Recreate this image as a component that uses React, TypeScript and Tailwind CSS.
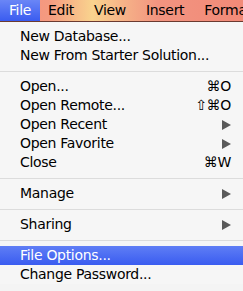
import React from "react";

const font = { fontFamily: '"Lucida Grande", "DejaVu Sans", "Liberation Sans", sans-serif' };

function Arrow() {
  return (
    <svg width="9" height="10" viewBox="0 0 9 10" className="block shrink-0">
      <path d="M0 0 L9 5 L0 10 Z" fill="#5a5a5a" />
    </svg>
  );
}

type Item = { label: string; sc?: string; sub?: boolean; hl?: boolean } | "sep";

const items: Item[] = [
  { label: "New Database..." },
  { label: "New From Starter Solution..." },
  "sep",
  { label: "Open...", sc: "⌘O" },
  { label: "Open Remote...", sc: "⇧⌘O" },
  { label: "Open Recent", sub: true },
  { label: "Open Favorite", sub: true },
  { label: "Close", sc: "⌘W" },
  "sep",
  { label: "Manage", sub: true },
  "sep",
  { label: "Sharing", sub: true },
  "sep",
  { label: "File Options...", hl: true },
  { label: "Change Password..." },
];

export default function App() {
  return (
    <div className="w-[243px] h-[291px] overflow-hidden bg-[#f4f4f4] text-[14px] tracking-[-0.3px] text-black" style={font}>
      <div className="h-[22px] flex items-stretch overflow-hidden border-b border-[#6b3a30] bg-[linear-gradient(90deg,#f6907c_0%,#f59a80_20%,#f9d38e_38%,#f6b488_50%,#f29480_65%,#f28a78_100%)]">
        <div className="w-[40px] shrink-0 flex items-center justify-center text-white bg-[linear-gradient(180deg,#6a86f6,#3a5cf0)]">File</div>
        <div className="flex items-center pl-[8px] gap-[20px] shrink-0 whitespace-nowrap">
          <span>Edit</span>
          <span>View</span>
          <span>Insert</span>
          <span>Format</span>
        </div>
      </div>
      <div className="pt-[5px] bg-[#f6f6f6]">
        {items.map((it, i) =>
          it === "sep" ? (
            <div key={i} className="h-[12px] flex items-center">
              <div className="w-full h-px bg-[#dcdcdc]" />
            </div>
          ) : (
            <div
              key={i}
              className={
                "h-[19px] flex items-center pl-[20px] pr-[12px] " +
                (it.hl ? "bg-[linear-gradient(180deg,#5f7ef5,#3a5cf0)] text-white" : "")
              }
            >
              <span className="flex-1 whitespace-nowrap">{it.label}</span>
              {it.sc && <span className="whitespace-nowrap">{it.sc}</span>}
              {it.sub && <Arrow />}
            </div>
          )
        )}
      </div>
    </div>
  );
}
